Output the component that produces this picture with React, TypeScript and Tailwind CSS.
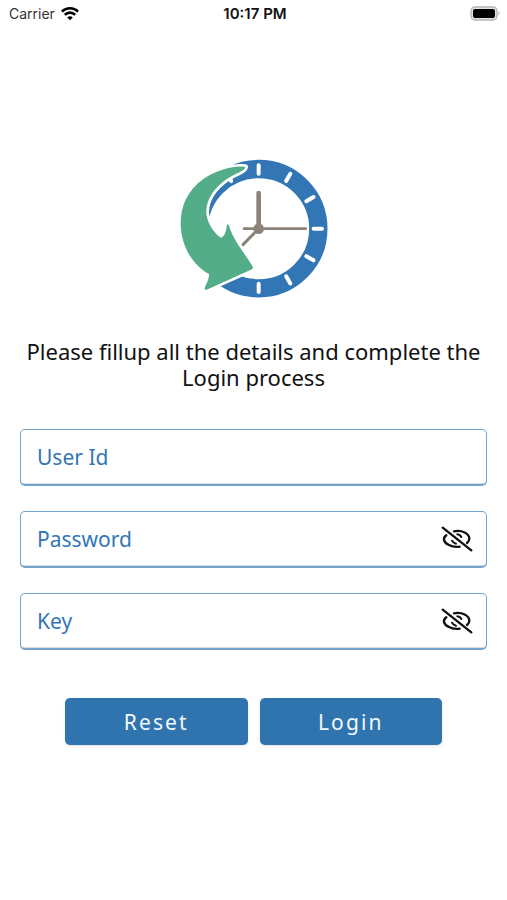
import { useState } from "react";

function StatusBar() {
  return (
    <header className="grid h-7 grid-cols-3 items-center pr-1.5 pl-[9px] font-['Inter',sans-serif] text-sm text-[#333]">
      <div className="flex items-center gap-1.5">
        <span>Carrier</span>
        <svg viewBox="0 0 18 14" className="h-3.5 w-[18px]" fill="none" stroke="#000" strokeWidth="2.6" aria-hidden="true">
          <path d="M.9 4.6a11.6 11.6 0 0 1 16.2 0" />
          <path d="M3.8 7.8a7.4 7.4 0 0 1 10.4 0" />
          <path d="M9 13.3 6.2 10.5a4 4 0 0 1 5.6 0z" fill="#000" stroke="none" />
        </svg>
      </div>
      <time className="text-center text-[15px] font-semibold text-[#111]">10:17 PM</time>
      <svg viewBox="0 0 31 16" className="h-4 w-[31px] justify-self-end" aria-hidden="true">
        <rect x="1" y="1" width="26" height="13" rx="4" fill="#e4e4e4" stroke="#b5b5b5" strokeWidth="1.4" />
        <rect x="3" y="3.1" width="22" height="8.8" rx="2" fill="#000" />
        <path d="M28.5 5.1q2.4 2.4 0 4.8z" fill="#b5b5b5" />
      </svg>
    </header>
  );
}

const tickAngles = [0, 30, 60, 90, 120, 150, 180, 330];

function ClockLogo() {
  return (
    <svg viewBox="30 26 444 417" className="h-[139px] w-[148px]" role="img" aria-label="Clock">
      <circle cx="266" cy="235" r="179" fill="none" stroke="#3276b5" strokeWidth="55" />
      <g stroke="#fff" strokeWidth="12" strokeLinecap="round">
        {tickAngles.map((angle) => (
          <path key={angle} d="M266 45V70" transform={`rotate(${angle} 266 235)`} />
        ))}
      </g>
      <g stroke="#8c8378" strokeLinecap="round">
        <path d="M266 128V235" strokeWidth="14" />
        <path d="M222 235H407" strokeWidth="8" />
        <path d="M266 235 219 283" strokeWidth="9" />
      </g>
      <circle cx="266" cy="235" r="16" fill="#8c8378" />
      <path
        d="M226 50C190 44 140 60 100 86C50 122 31 170 32 225C34 285 65 343 118 372C116 390 108 402 104 413Q103 420 110 418L246 357Q251 354 247 347C225 310 190 270 177 226Q173 219 170 226C169 242 165 256 153 262C135 251 113 222 109 190C107 140 145 98 190 75C205 66 224 62 226 50Z"
        fill="#54ad89"
        stroke="#fff"
        strokeWidth="16"
        strokeLinejoin="round"
        paintOrder="stroke"
      />
    </svg>
  );
}

function EyeOff() {
  return (
    <svg viewBox="33 33 96 78" className="h-[26px] w-8" fill="none" stroke="#111" strokeWidth="7" strokeLinecap="round" aria-hidden="true">
      <path d="M38 38 124 106" />
      <path d="M72 49C96 44 118 56 118 71Q118 78 111 84" />
      <path d="M49 61C37 69 41 82 55 89C66 95 78 97 89 95" />
      <path d="M82 58Q91 59 94 66" strokeWidth="6" />
      <path d="M66 77Q69 84 78 86" strokeWidth="6" />
    </svg>
  );
}

function Field({ id, label, secret = false }: { id: string; label: string; secret?: boolean }) {
  const [hidden, setHidden] = useState(secret);
  return (
    <div className="relative flex h-[57px] items-center rounded-[5px] border border-b-2 border-[#74a3cb] bg-white pr-[13px] pl-4 shadow-[inset_0_-1px_0_#d9dcdf]">
      <input
        id={id}
        type={hidden ? "password" : "text"}
        placeholder=" "
        className="peer h-full min-w-0 flex-1 bg-transparent text-[21px] text-[#3276b5] outline-none"
      />
      <label
        htmlFor={id}
        className="pointer-events-none invisible absolute inset-y-0 left-4 flex items-center text-[21px] leading-[26px] text-[#3276b5] peer-placeholder-shown:visible"
      >
        {label}
      </label>
      {secret && (
        <button type="button" aria-label={`Show or hide ${label}`} onClick={() => setHidden(!hidden)}>
          <EyeOff />
        </button>
      )}
    </div>
  );
}

const buttonClass =
  "h-[47px] flex-1 rounded-[5px] bg-[#2f74ae] text-[21px] leading-[26px] tracking-widest text-[#f2f8ff] shadow-sm";

export default function App() {
  return (
    <div className="min-h-screen bg-white font-['Noto_Sans',sans-serif]">
      <StatusBar />
      <main className="flex flex-col px-5 pt-[131px]">
        <div className="flex justify-center">
          <ClockLogo />
        </div>
        <h1 className="mt-10 text-center text-[22px] leading-[26px] text-[#111]">
          Please fillup all the details and complete the Login process
        </h1>
        <form className="mt-[39px]" onSubmit={(event) => event.preventDefault()}>
          <div className="flex flex-col gap-[25px]">
            <Field id="user-id" label="User Id" />
            <Field id="password" label="Password" secret />
            <Field id="key" label="Key" secret />
          </div>
          <div className="mt-12 flex gap-3 px-[45px]">
            <button type="reset" className={buttonClass}>
              Reset
            </button>
            <button type="submit" className={buttonClass}>
              Login
            </button>
          </div>
        </form>
      </main>
    </div>
  );
}
